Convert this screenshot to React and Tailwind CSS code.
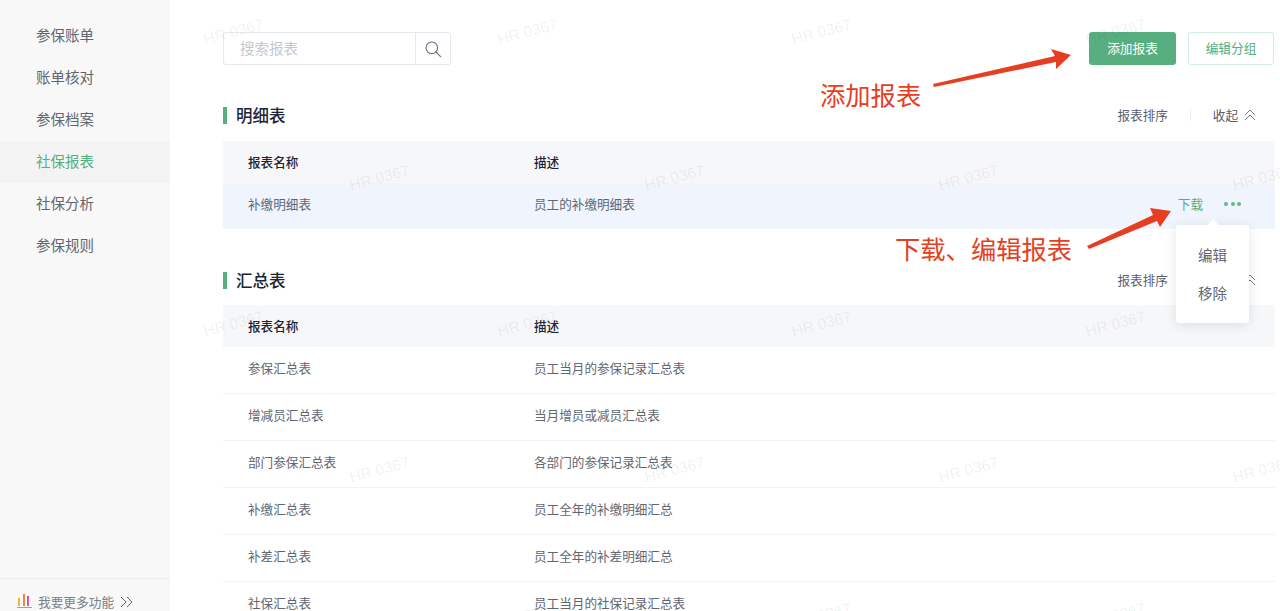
const navItems = ["参保账单", "账单核对", "参保档案", "社保报表", "社保分析", "参保规则"];

const summaryRows = [
    ["参保汇总表", "员工当月的参保记录汇总表"],
    ["增减员汇总表", "当月增员或减员汇总表"],
    ["部门参保汇总表", "各部门的参保记录汇总表"],
    ["补缴汇总表", "员工全年的补缴明细汇总"],
    ["补差汇总表", "员工全年的补差明细汇总"],
    ["社保汇总表", "员工当月的社保记录汇总表"],
];

const marks = [
    "left-[203px] top-[22px]", "left-[497px] top-[22px]", "left-[791px] top-[22px]", "left-[1085px] top-[22px]",
    "left-[349px] top-[168px]", "left-[644px] top-[168px]", "left-[938px] top-[168px]", "left-[1232px] top-[168px]",
    "left-[203px] top-[314px]", "left-[497px] top-[314px]", "left-[791px] top-[314px]", "left-[1085px] top-[314px]",
    "left-[349px] top-[460px]", "left-[644px] top-[460px]", "left-[938px] top-[460px]", "left-[1232px] top-[460px]",
    "left-[497px] top-[606px]", "left-[791px] top-[606px]", "left-[1085px] top-[606px]",
];

function SectionHead({ title, className }) {
    return (
        <div className={`flex items-center justify-between ${className}`}>
            <div className="flex items-center">
                <span className="w-1 h-[17px] bg-[#57ae7f] mr-[9px]"></span>
                <h2 className="text-[16.5px] leading-5 font-medium text-[#1d2433]">{title}</h2>
            </div>
            <div className="flex items-center text-[12.6px] text-[#5a6070] pr-[19px]">
                <span>报表排序</span>
                <span className="w-px h-3 bg-[#e9ebef] mx-[22px]"></span>
                <span>收起</span>
                <svg width="12" height="12" viewBox="0 0 12 12" fill="none" stroke="#777d8a" strokeWidth="1" className="ml-[6px]">
                    <path d="M1 6l5-5 5 5" />
                    <path d="M1 11l5-5 5 5" />
                </svg>
            </div>
        </div>
    );
}

function TableHead() {
    return (
        <div className="flex items-center h-[42px] bg-[#f6f7f9] pl-[25px] text-[12.6px] font-medium text-[#1d2433]">
            <span className="w-[286px]">报表名称</span>
            <span>描述</span>
        </div>
    );
}

export default function App() {
    return (
        <div className="relative flex w-[1280px] h-[611px] overflow-hidden bg-white font-['Noto_Sans_CJK_SC','Noto_Sans',sans-serif]">
            <aside className="relative z-10 flex flex-col w-[170px] h-full bg-[#f8f8f8]">
                <nav className="flex-1 pt-[15px]">
                    {navItems.map((item) => (
                        <div
                            key={item}
                            className={`flex items-center h-[42px] pl-9 pb-0.5 text-[14.5px] ${item === "社保报表" ? "bg-[#f3f3f3] text-[#57ae7f]" : "text-[#62666f]"}`}
                        >
                            {item}
                        </div>
                    ))}
                </nav>
                <div className="flex items-center h-[33px] pl-[17px] pt-[14px] border-t border-[#ececf2] text-[12.7px] text-[#7b7f88]">
                    <svg width="15" height="14" viewBox="0 0 15 14" className="mr-[6px] -mt-[2px]">
                        <rect x="1" y="4" width="2" height="8" fill="#f2b33d" />
                        <rect x="6" y="0" width="2" height="12" fill="#ec8a3a" />
                        <rect x="10" y="2" width="2" height="10" fill="#d257b5" />
                        <rect x="0" y="13" width="15" height="1" fill="#6aaef0" />
                    </svg>
                    <span>我要更多功能</span>
                    <svg width="13" height="12" viewBox="0 0 13 12" fill="none" stroke="#62666f" strokeWidth="1" className="ml-[6px]">
                        <path d="M1 1l5 5-5 5" />
                        <path d="M7 1l5 5-5 5" />
                    </svg>
                </div>
            </aside>

            <main className="flex-1 pl-[53px] pr-[5px] pt-[32px]">
                <div className="flex items-center justify-between h-[33px]">
                    <div className="flex w-[228px] h-[33px] bg-white border border-[#e6e8ef] rounded-[3px]">
                        <div className="flex-1 flex items-center pl-4 pb-0.5 text-[14.5px] text-[#c4c7cf]">搜索报表</div>
                        <div className="flex items-center justify-center w-[35px] border-l border-[#e6e8ef]">
                            <svg width="18" height="18" viewBox="0 0 18 18" fill="none" stroke="#6f7480" strokeWidth="1.2">
                                <circle cx="7.8" cy="7.8" r="5.8" />
                                <path d="M12 12l4.6 4.6" strokeLinecap="round" />
                            </svg>
                        </div>
                    </div>
                    <div className="flex gap-3 mr-px">
                        <button className="w-[87px] h-[33px] pb-0.5 bg-[#57ae7f] rounded-[3px] text-[12.7px] text-white">添加报表</button>
                        <button className="w-[86px] h-[33px] pb-0.5 bg-white border border-[#cfeee0] rounded-[3px] text-[12.7px] text-[#57ae7f]">编辑分组</button>
                    </div>
                </div>

                <SectionHead title="明细表" className="mt-[40px] h-5" />
                <div className="mt-[16px]">
                    <TableHead />
                    <div className="flex items-center h-[46px] bg-[#f0f4fd] pl-[25px] pb-1 text-[12.6px] text-[#62666f]">
                        <span className="w-[286px]">补缴明细表</span>
                        <span>员工的补缴明细表</span>
                        <span className="ml-auto text-[#57ae7f]">下载</span>
                        <span className="flex gap-[2.5px] ml-[21px] mr-[34px]">
                            <i className="w-[4px] h-[4px] rounded-full bg-[#5fb98a]"></i>
                            <i className="w-[4px] h-[4px] rounded-full bg-[#5fb98a]"></i>
                            <i className="w-[4px] h-[4px] rounded-full bg-[#5fb98a]"></i>
                        </span>
                    </div>
                </div>

                <SectionHead title="汇总表" className="mt-[41px] h-5" />
                <div className="mt-[15px]">
                    <TableHead />
                    {summaryRows.map(([name, desc]) => (
                        <div key={name} className="flex items-center h-[47px] pl-[25px] pb-1 border-b border-[#f2f3f6] text-[12.6px] text-[#62666f]">
                            <span className="w-[286px]">{name}</span>
                            <span>{desc}</span>
                        </div>
                    ))}
                </div>
            </main>

            {marks.map((pos) => (
                <span key={pos} className={`absolute ${pos} -rotate-[15deg] whitespace-nowrap text-[15.5px] leading-5 font-['Liberation_Sans',sans-serif] text-[#1d2433]/[0.07] pointer-events-none`}>
                    HR 0367
                </span>
            ))}

            {/* 下拉菜单 */}
            <div className="absolute left-[1176px] top-[225px] w-[73px] h-[98px] bg-white rounded-[3px] shadow-[0_2px_12px_rgba(30,40,60,0.12)] text-[14.5px] text-[#62666f] flex flex-col items-center pt-[20px] gap-[18px]">
                <span className="absolute -top-[4px] left-[33px] w-2 h-2 rotate-45 bg-white"></span>
                <span className="leading-5">编辑</span>
                <span className="leading-5">移除</span>
            </div>

            {/* 标注 */}
            <svg width="1280" height="611" className="absolute left-0 top-0 pointer-events-none">
                <polygon fill="#e63e22" points="933,84 1055,56 1051,49 1071,55 1056,69 1056,62 934,87" />
                <polygon fill="#e63e22" points="1087,246 1153,215 1150,208 1171,211 1160,227 1157,221 1089,249" />
            </svg>
            <span className="absolute left-[820px] top-[76px] text-[25.3px] leading-9 text-[#e63e22]">添加报表</span>
            <span className="absolute left-[895px] top-[230px] text-[25.3px] leading-9 text-[#e63e22]">下载、编辑报表</span>
        </div>
    );
}
